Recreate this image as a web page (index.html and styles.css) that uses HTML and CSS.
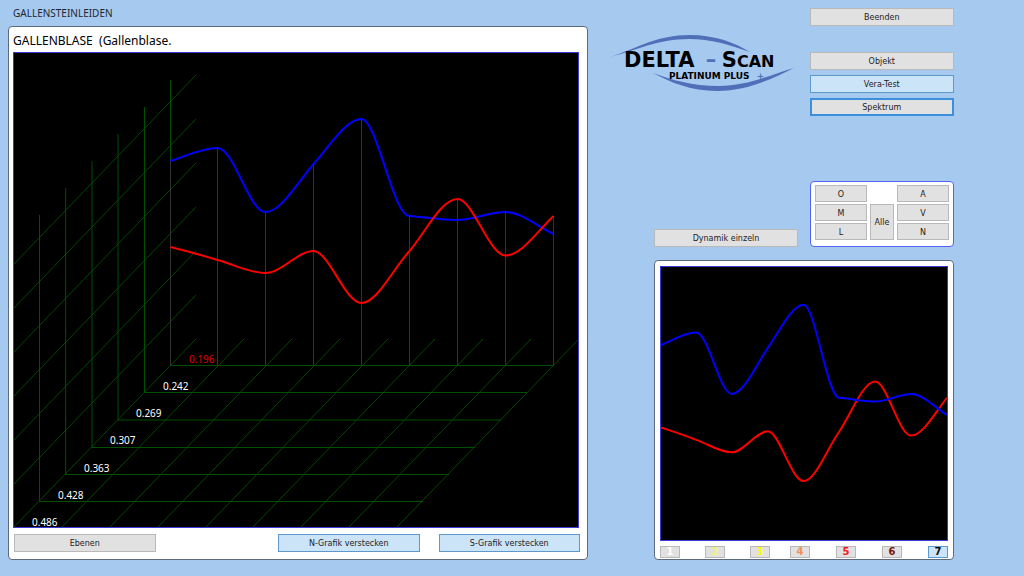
FILE: index.html
```html
<!DOCTYPE html>
<html lang="de">
<head>
    <meta charset="UTF-8">
    <title>Delta-Scan Platinum Plus</title>
    <link rel="stylesheet" href="styles.css">
</head>
<body>
    <main class="left">
        <h1>GALLENSTEINLEIDEN</h1>

        <section class="panel main-panel">
            <h2>GALLENBLASE&nbsp; (Gallenblase.</h2>

            <svg class="chart" viewBox="14 53 564 474" role="img" aria-label="Spektrum">
                <!-- Diagonalen Wand -->
                <path class="diagonal" d="M196 75L0 278.5M196 119L0 322.5M196 163L0 366.5M196 207L0 410.5M196 251L0 454.5M196 295L0 498.5"/>
                <!-- Diagonalen Boden -->
                <path class="diagonal" d="M196 339L13 528M244 339L61 528M292 339L109 528M340 339L157 528M388 339L205 528M435 339L252 528M483 339L300 528M531 339L348 528M579 339L396 528"/>
                <!-- Ebenen -->
                <path class="plane" d="M170.5 80V365.5H553.5"/>
                <path class="plane" d="M144.5 107V392.5H527"/>
                <path class="plane" d="M118 134V420H501"/>
                <path class="plane" d="M92 161V447.5H475"/>
                <path class="plane" d="M65.7 188V474.5H449"/>
                <path class="plane" d="M39.5 215V501.5H423"/>
                <!-- Frequenzlinien -->
                <path class="marker" d="M170.5 161V365M217.5 148V365M265.5 212V365M313.5 164V365M361.5 119V365M409.5 216V365M457.5 199V365M505.5 212V365M553.5 216V365"/>

                <path id="blueCurve" class="curve blue" d="M170.5 161C186 156 202 148 217.5 148C234 148 249 212 265.5 212C281 212 298 182 313.5 164C329 147 346 119 361.5 119C377 119 393 216 409.5 216C425 217 441 220 457.5 220C473 220 489 212 505.5 212C521 212 537 226 553.5 234"/>
                <path id="redCurve" class="curve red" d="M170.5 247C186 251 202 255 217.5 260C233 264 249 273 265.5 273C281 273 298 251 313.5 251C329 251 345 303 361.5 303C377 303 393 269 409.5 251C425 233 441 199 457.5 199C473 199 489 255.5 505.5 255.5C521 255.5 537 232 553.5 216"/>

                <text class="value active" x="189" y="363">0.196</text>
                <text class="value" x="163" y="390">0.242</text>
                <text class="value" x="136" y="417">0.269</text>
                <text class="value" x="110" y="444">0.307</text>
                <text class="value" x="84" y="472">0.363</text>
                <text class="value" x="58" y="499">0.428</text>
                <text class="value" x="32" y="526">0.486</text>
            </svg>

            <div class="footer">
                <button type="button" class="first">Ebenen</button>
                <button type="button" class="on">N-Grafik verstecken</button>
                <button type="button" class="on">S-Grafik verstecken</button>
            </div>
        </section>
    </main>

    <aside class="right">
        <div class="top">
            <svg class="logo" viewBox="0 0 186 60" role="img" aria-label="Delta-Scan Platinum Plus">
                <path class="swoosh" d="M0 22C28 13 47 0 80 0C105 0 126 8 140 17C120 10 101 4 79 4C49 4 27 15 0 22Z"/>
                <path class="swoosh" d="M43 38C62 45 82 51 109 51C136 51 158 41 184 33C160 45 137 56 108 56C80 56 60 47 43 38Z"/>
                <text class="brand" x="14" y="32">DELTA<tspan class="accent" x="96">–</tspan><tspan x="112">S</tspan><tspan class="small-caps">CAN</tspan></text>
                <text class="edition" x="59" y="44">PLATINUM PLUS<tspan class="accent" x="147">+</tspan></text>
            </svg>

            <nav class="menu">
                <button type="button" class="quit">Beenden</button>
                <button type="button">Objekt</button>
                <button type="button" class="on">Vera-Test</button>
                <button type="button" class="focused">Spektrum</button>
            </nav>
        </div>

        <div class="tools">
            <button type="button" class="dynamic">Dynamik einzeln</button>
            <div class="keypad">
                <button type="button">O</button>
                <button type="button" class="col-3">A</button>
                <button type="button">M</button>
                <button type="button" class="all">Alle</button>
                <button type="button" class="col-3">V</button>
                <button type="button">L</button>
                <button type="button" class="col-3">N</button>
            </div>
        </div>

        <section class="panel small-panel">
            <svg class="chart small" viewBox="170.5 79.5 383 285" preserveAspectRatio="none" role="img" aria-label="Kurvenvergleich">
                <use href="#redCurve"/>
                <use href="#blueCurve"/>
            </svg>
            <div class="levels">
                <button type="button" class="l1">1</button>
                <button type="button" class="l2">2</button>
                <button type="button" class="l3">3</button>
                <button type="button" class="l4">4</button>
                <button type="button" class="l5">5</button>
                <button type="button" class="l6">6</button>
                <button type="button" class="l7 on">7</button>
            </div>
        </section>
    </aside>
</body>
</html>
```

FILE: styles.css
```css
* {
    box-sizing: border-box;
}

body {
    margin: 0;
    padding: 8px 70px 8px 8px;
    background-color: #a6c9ef;
    font-family: "Noto Sans", Tahoma, sans-serif;
    color: #000;
    display: grid;
    grid-template-columns: 580fr 344fr;
    gap: 22px;
    align-items: start;
}

h1, h2 {
    margin: 0;
    font-weight: normal;
}

h1 {
    font-size: 10px;
    line-height: 10px;
    padding-left: 5px;
    margin-bottom: 8px;
    color: #1c2733;
}

h2 {
    font-size: 12px;
    line-height: 16px;
    margin-bottom: 3px;
}

button {
    height: 18px;
    padding: 2px 0 0;
    border: 1px solid #b9b9b9;
    background-color: #e1e1e1;
    color: #222;
    font-family: "DejaVu Sans", Verdana, sans-serif;
    font-size: 8px;
    line-height: 12px;
}

button.on {
    background-color: #cce4f7;
    border-color: #5f98cb;
}

button.focused {
    border: 2px solid #3c8fdc;
}

.panel {
    background-color: #fff;
    border: 1px solid #5c6b7c;
    border-radius: 4px;
}

.main-panel {
    padding: 6px 8px 7px 4px;
}

/* Diagramme */
.chart {
    display: block;
    width: 100%;
    height: auto;
    background-color: #000;
    border: 1px solid #3a3ad8;
}

.diagonal {
    stroke: #004800;
    stroke-width: 1;
    fill: none;
}

.plane {
    stroke: #005000;
    stroke-width: 1;
    fill: none;
}

.marker {
    stroke: #333;
    stroke-width: 1;
}

.curve {
    fill: none;
    stroke-width: 2;
    vector-effect: non-scaling-stroke;
}

.blue {
    stroke: #00f;
}

.red {
    stroke: #f00;
}

.value {
    fill: #fff;
    font-size: 10px;
}

.value.active {
    fill: #e00000;
}

.footer {
    display: flex;
    gap: 19px;
    margin: 6px -1px 0 1px;
}

.footer button {
    width: 25%;
}

.footer .first {
    margin-right: auto;
}

/* Rechte Spalte */
.top {
    display: flex;
    justify-content: space-between;
    align-items: flex-start;
}

.logo {
    width: 54%;
    margin-top: 27px;
}

.swoosh, .accent {
    fill: #4f6fb8;
}

.brand, .edition {
    font-family: "DejaVu Sans", Verdana, sans-serif;
    font-weight: bold;
}

.brand {
    font-size: 21px;
}

.small-caps {
    font-size: 16px;
}

.edition {
    font-size: 9px;
}

.menu {
    width: 42%;
    display: flex;
    flex-direction: column;
    gap: 5px;
}

.quit {
    margin-bottom: 21px;
}

.tools {
    display: flex;
    justify-content: space-between;
    align-items: flex-end;
    margin: 65px 0 13px 44px;
}

.dynamic {
    width: 48%;
}

.keypad {
    width: 48%;
    display: grid;
    grid-template-columns: 52fr 24fr 52fr;
    grid-template-rows: repeat(3, 17px);
    gap: 2px 3px;
    padding: 3px 4px 6px;
    background-color: #fff;
    border: 1px solid #5560f5;
    border-radius: 4px;
}

.keypad button {
    height: auto;
}

.keypad .col-3 {
    grid-column: 3;
}

.keypad .all {
    grid-column: 2;
    grid-row: 2 / span 2;
}

.small-panel {
    margin-left: 44px;
    padding: 5px 5px 0;
}

.chart.small {
    aspect-ratio: 288 / 275;
}

.levels {
    display: grid;
    grid-template-columns: 45fr 45fr 40fr 46fr 46fr 46fr 20fr;
    padding: 5px 0 1px;
}

.levels button {
    width: 20px;
    height: 12px;
    padding: 0;
    font-size: 10px;
    font-weight: bold;
    line-height: 10px;
}

.levels .l1 { color: #fff; }
.levels .l2 { color: #f2f27c; }
.levels .l3 { color: #ff0; }
.levels .l4 { color: #f0905a; }
.levels .l5 { color: #f01818; }
.levels .l6 { color: #7a1408; }
.levels .l7 { color: #111; }
```
